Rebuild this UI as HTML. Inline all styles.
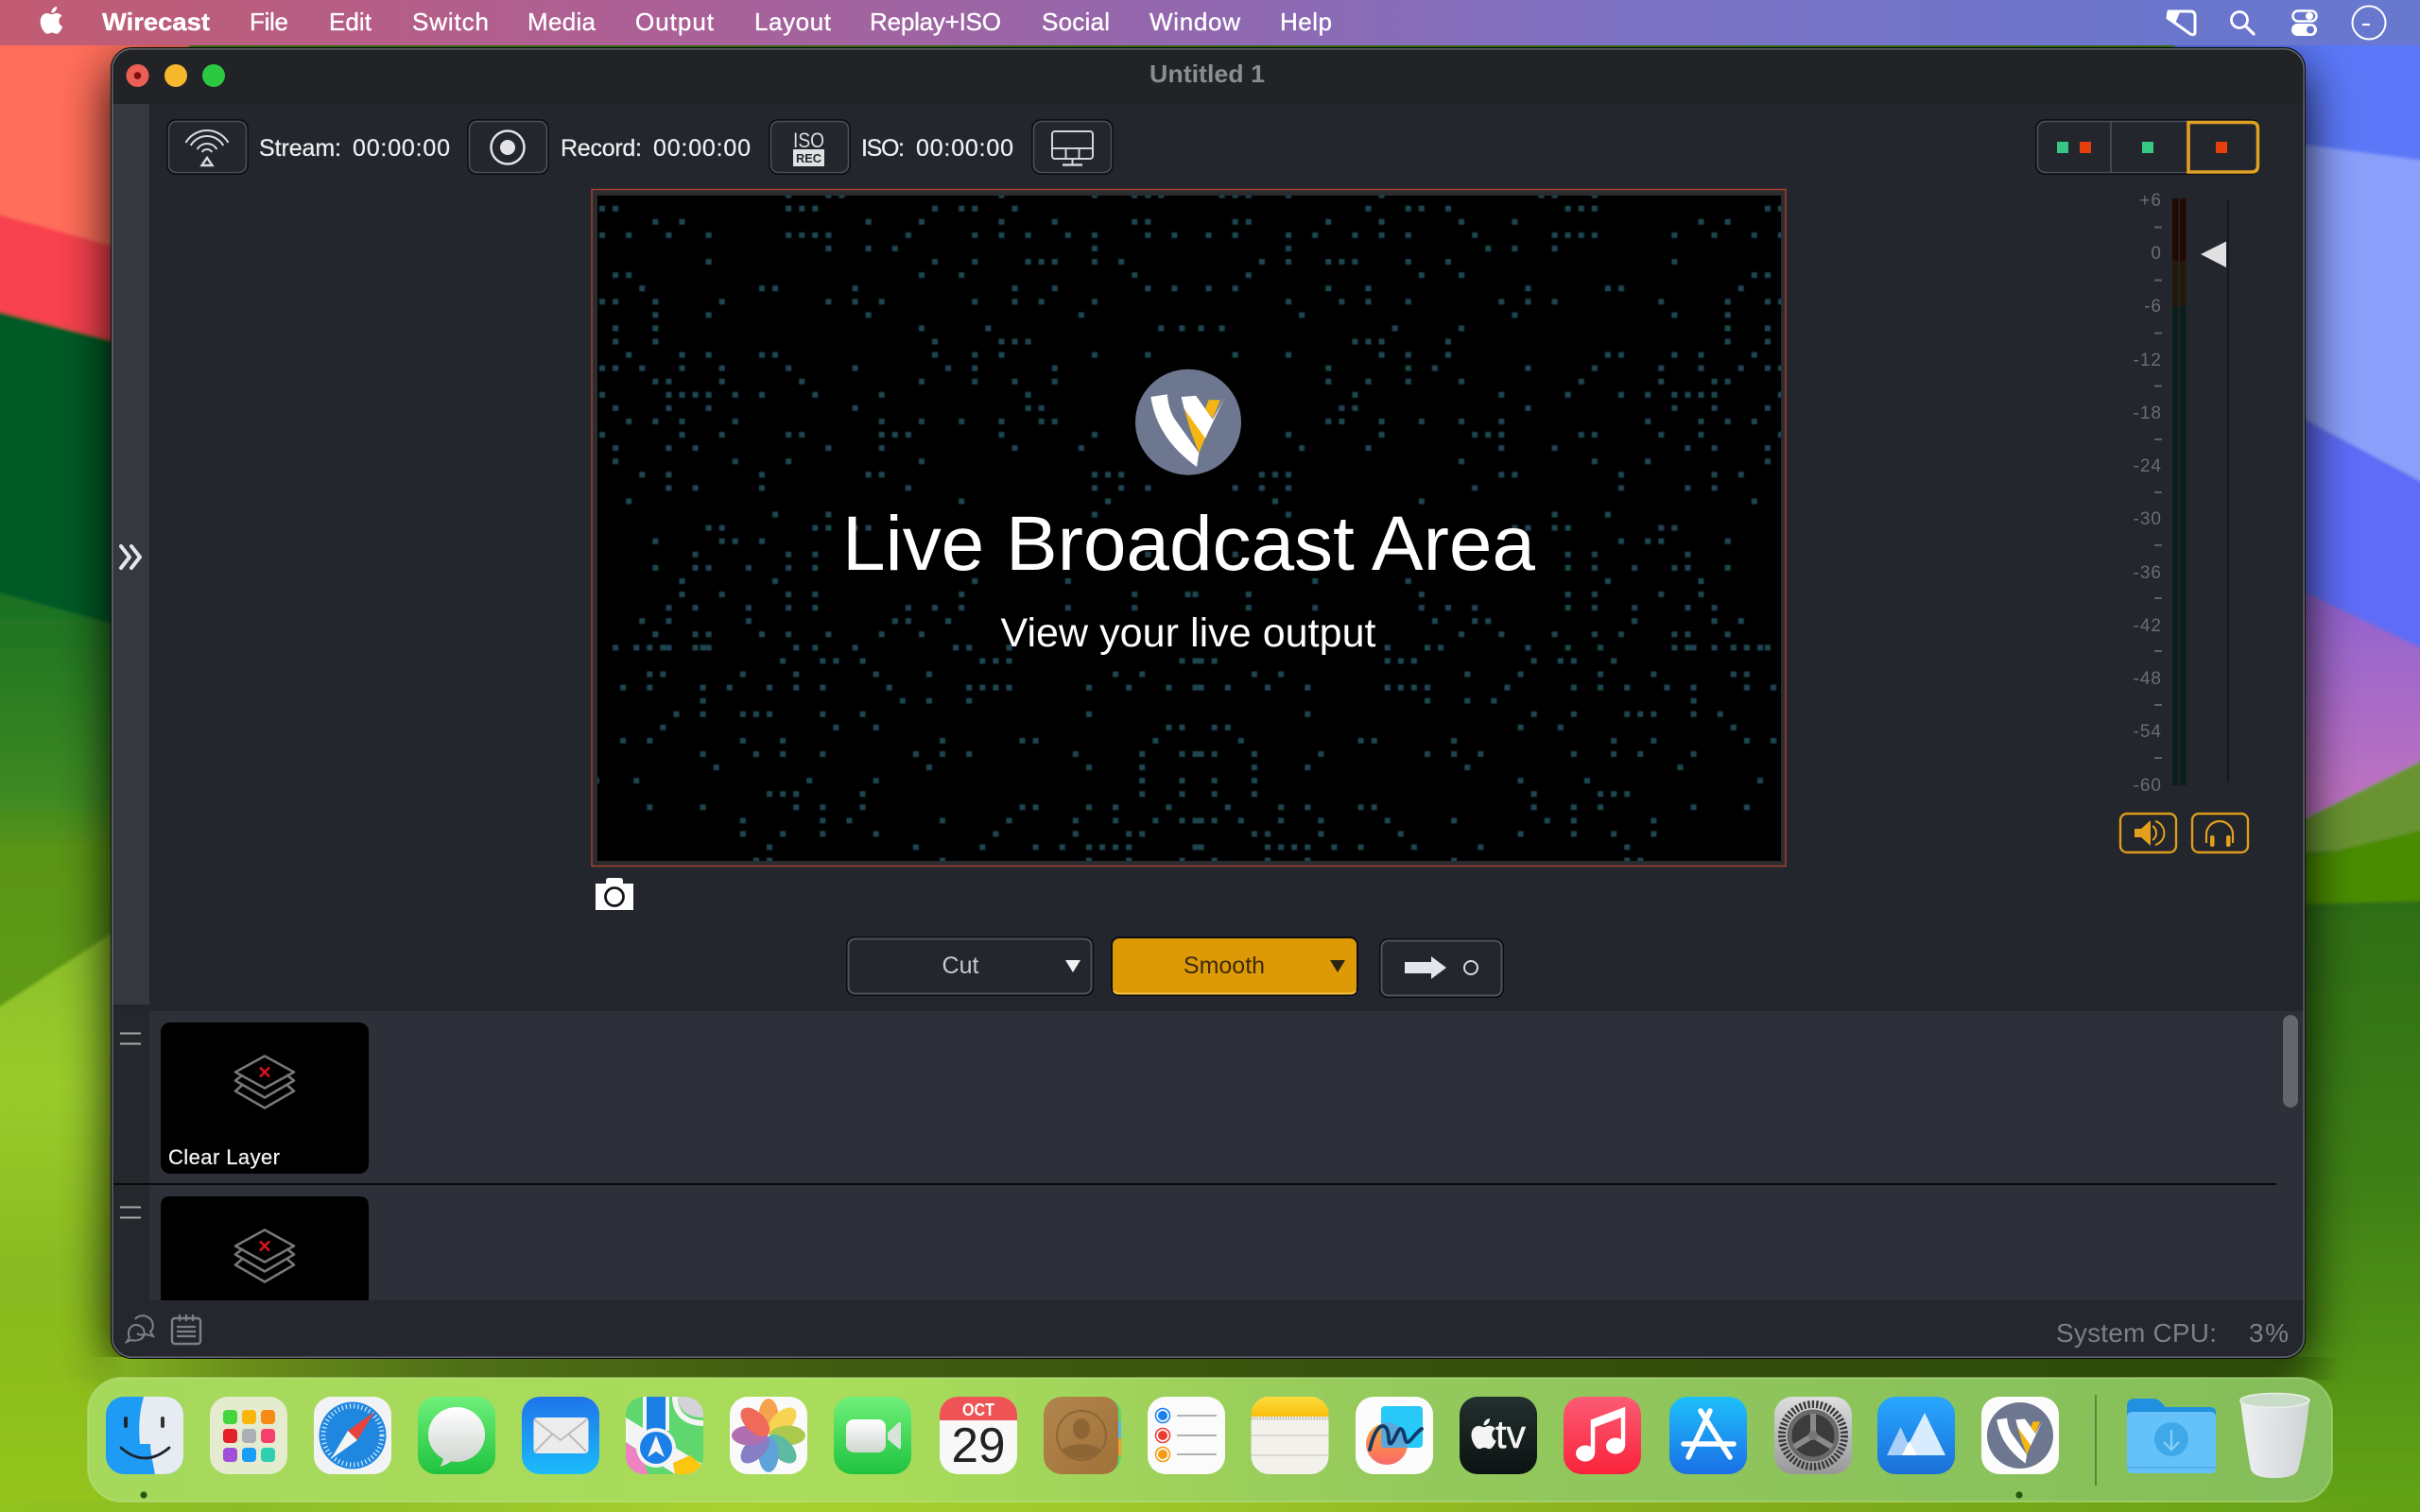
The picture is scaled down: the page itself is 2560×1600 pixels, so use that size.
<!DOCTYPE html>
<html lang="en">
<head>
<meta charset="utf-8">
<title>Wirecast – Untitled 1</title>
<style>
html,body{margin:0;padding:0;width:2560px;height:1600px;overflow:hidden;background:#5a9614}
svg{display:block;position:absolute;left:0;top:0}
text{font-family:"Liberation Sans",sans-serif}
.m{font-size:26px;fill:#fff;stroke:#fff;stroke-width:.35}
.t{font-size:25px;fill:#eceef0;stroke:#eceef0;stroke-width:.25}
.l{font-size:19px;fill:#6a6d73;text-anchor:end;letter-spacing:1px}
</style>
</head>
<body>
<svg width="2560" height="1600" viewBox="0 0 2560 1600" xmlns="http://www.w3.org/2000/svg">
<defs>
<filter id="b3" x="-10%" y="-10%" width="120%" height="120%"><feGaussianBlur stdDeviation="1.5"/></filter>
<filter id="b1" x="-2%" y="-2%" width="104%" height="104%"><feGaussianBlur stdDeviation=".6"/></filter>
<filter id="sh" x="-10%" y="-10%" width="120%" height="120%"><feGaussianBlur stdDeviation="26"/></filter>
<linearGradient id="mb" x1="0" x2="1" y1="0" y2="0"><stop offset="0" stop-color="#c25c72"/><stop offset=".25" stop-color="#ae6094"/><stop offset=".5" stop-color="#9168b0"/><stop offset=".67" stop-color="#7e72c4"/><stop offset=".9" stop-color="#6a76cc"/><stop offset="1" stop-color="#6878cf"/></linearGradient>
<linearGradient id="lm" gradientUnits="userSpaceOnUse" x1="0" x2="0" y1="620" y2="1040"><stop offset="0" stop-color="#1a7020"/><stop offset=".54" stop-color="#3f8a22"/><stop offset=".66" stop-color="#5a9418"/><stop offset="1" stop-color="#5e9a18"/></linearGradient>
<linearGradient id="ll" gradientUnits="userSpaceOnUse" x1="0" x2="0" y1="1000" y2="1600"><stop offset="0" stop-color="#8cc02c"/><stop offset=".25" stop-color="#9acb2c"/><stop offset=".58" stop-color="#8aba20"/><stop offset="1" stop-color="#94c41e"/></linearGradient>
<linearGradient id="pp" gradientUnits="userSpaceOnUse" x1="0" x2="0" y1="620" y2="840"><stop offset="0" stop-color="#8f62d0"/><stop offset="1" stop-color="#bc72c0"/></linearGradient>
<linearGradient id="rg" gradientUnits="userSpaceOnUse" x1="0" x2="0" y1="955" y2="1600"><stop offset="0" stop-color="#2f6e14"/><stop offset=".46" stop-color="#3f8014"/><stop offset=".85" stop-color="#5a9a14"/><stop offset="1" stop-color="#64a418"/></linearGradient>
<linearGradient id="s1" x1="0" x2="1" y1="0" y2="0"><stop offset="0" stop-color="#84ac1e" stop-opacity="0"/><stop offset=".03" stop-color="#7fae20"/><stop offset=".08" stop-color="#6a8e1a"/><stop offset=".18" stop-color="#4e6e16"/><stop offset=".35" stop-color="#3f5a10"/><stop offset=".7" stop-color="#344e0c"/><stop offset=".965" stop-color="#2c4a08"/><stop offset="1" stop-color="#2c4a08" stop-opacity="0"/></linearGradient>
<linearGradient id="s2" x1="0" x2="1" y1="0" y2="0"><stop offset="0" stop-color="#92c21e"/><stop offset=".1" stop-color="#8dbd26"/><stop offset=".3" stop-color="#a8d030"/><stop offset=".45" stop-color="#a0ca2c"/><stop offset=".7" stop-color="#86ae1c"/><stop offset="1" stop-color="#62a016"/></linearGradient>
<linearGradient id="dk" x1="0" x2="1" y1="0" y2="0"><stop offset="0" stop-color="#a6d85c"/><stop offset=".35" stop-color="#a9dc5a"/><stop offset=".6" stop-color="#93c85c"/><stop offset="1" stop-color="#84be5a"/></linearGradient>
<linearGradient id="mail" x1="0" x2="0" y1="0" y2="1"><stop offset="0" stop-color="#1e74ea"/><stop offset="1" stop-color="#1cbcfb"/></linearGradient>
<linearGradient id="grn" x1="0" x2="0" y1="0" y2="1"><stop offset="0" stop-color="#6ff07a"/><stop offset="1" stop-color="#1fc23e"/></linearGradient>
<linearGradient id="wht" x1="0" x2="0" y1="0" y2="1"><stop offset="0" stop-color="#fff"/><stop offset="1" stop-color="#cfd6d0"/></linearGradient>
<linearGradient id="asb" x1="0" x2="0" y1="0" y2="1"><stop offset="0" stop-color="#1ec0fb"/><stop offset="1" stop-color="#1a6fe6"/></linearGradient>
<linearGradient id="alt" x1="0" x2="0" y1="0" y2="1"><stop offset="0" stop-color="#28a8ff"/><stop offset="1" stop-color="#1a6fd8"/></linearGradient>
<linearGradient id="mus" x1="0" x2="0" y1="0" y2="1"><stop offset="0" stop-color="#fb5c74"/><stop offset="1" stop-color="#fa233b"/></linearGradient>
<linearGradient id="tvb" x1="0" x2="0" y1="0" y2="1"><stop offset="0" stop-color="#22302e"/><stop offset="1" stop-color="#0c1212"/></linearGradient>
<linearGradient id="gear" x1="0" x2="0" y1="0" y2="1"><stop offset="0" stop-color="#dcdee0"/><stop offset="1" stop-color="#989898"/></linearGradient>
<linearGradient id="brn" x1="0" x2="1" y1="0" y2="1"><stop offset="0" stop-color="#b2854e"/><stop offset="1" stop-color="#a07238"/></linearGradient>
<linearGradient id="ntop" x1="0" x2="0" y1="0" y2="1"><stop offset="0" stop-color="#fedc3c"/><stop offset="1" stop-color="#f9c00c"/></linearGradient>
<linearGradient id="ffo" x1="0" x2="0" y1="0" y2="1"><stop offset="0" stop-color="#ffaa30"/><stop offset="1" stop-color="#f76a6a"/></linearGradient>
<linearGradient id="trs" x1="0" x2="1" y1="0" y2="0"><stop offset="0" stop-color="#eef0f0"/><stop offset=".6" stop-color="#dcdfe2"/><stop offset="1" stop-color="#cfd2d4"/></linearGradient>
<clipPath id="wc"><rect x="118" y="51" width="2320" height="1386" rx="22"/></clipPath>
<clipPath id="pc"><rect x="632" y="207" width="1252" height="704"/></clipPath>
<clipPath id="t82"><rect width="82" height="82" rx="19"/></clipPath>
<path id="apl" d="M12.152 6.896c-.948 0-2.415-1.078-3.96-1.04-2.04.027-3.91 1.183-4.961 3.014-2.117 3.675-.546 9.103 1.519 12.09 1.013 1.454 2.208 3.09 3.792 3.039 1.52-.065 2.09-.987 3.935-.987 1.831 0 2.35.987 3.96.948 1.637-.026 2.676-1.48 3.676-2.948 1.156-1.688 1.636-3.325 1.662-3.415-.039-.013-3.182-1.221-3.22-4.857-.026-3.04 2.48-4.494 2.597-4.559-1.429-2.09-3.623-2.324-4.39-2.376-2-.156-3.675 1.09-4.61 1.09zM15.53 3.83c.843-1.012 1.4-2.427 1.245-3.83-1.207.052-2.662.805-3.532 1.818-.78.896-1.454 2.338-1.273 3.714 1.338.104 2.715-.688 3.559-1.701"/>
<g id="wl">
<circle cx="56" cy="56" r="56" fill="#6d7890"/>
<path d="M51.700 42L74 72.600L67.300 88.600L58.800 66Z" fill="#f7b512"/>
<path d="M16.400 29.300L33.800 26.600C35 40 38 48 44 56L67.300 88.600L65 103.300C44 88 22 66 16.400 29.300Z" fill="#fff"/>
<path d="M48.600 29.300L64 28L82 53L94.500 30L74 73L51.700 42Z" fill="#fff"/>
<path d="M77.600 32.600L90 32.600L82 52L74 42Z" fill="#f7b512"/>
</g>
<g id="lay" fill="none" stroke="#77787a" stroke-width="2.600" stroke-linejoin="round" stroke-linecap="round">
<path d="M-24 14L-31 20L0 38L31 20L24 14"/>
<path d="M-24 3.500L-31 9L0 27L31 9L24 3.500"/>
<path d="M0 -17L31 0L0 17L-31 0Z"/>
<path d="M-5 -5L5 5M5 -5L-5 5" stroke="#d8141c" stroke-width="2.600" stroke-linecap="butt"/>
</g>
<path id="dots" fill="none" stroke="#2b6272" stroke-width=".43" d="M14 -1h.43M17 -1h.43M18 -1h.43M30 -1h.43M37 -1h.43M40 -1h.43M41 -1h.43M42 -1h.43
M0 0h.43M1 0h.43M14 0h.43M15 0h.43M16 0h.43M25 0h.43M27 0h.43M28 0h.43M31 0h.43
M4 1h.43M6 1h.43M20 1h.43M24 1h.43M30 1h.43M34 1h.43M40 1h.43M41 1h.43
M0 2h.43M2 2h.43M5 2h.43M8 2h.43M14 2h.43M15 2h.43M16 2h.43M17 2h.43M23 2h.43M28 2h.43M30 2h.43M32 2h.43M35 2h.43M37 2h.43M41 2h.43M43 2h.43
M17 3h.43M20 3h.43M22 3h.43M37 3h.43
M8 4h.43M25 4h.43M28 4h.43M32 4h.43M33 4h.43M34 4h.43M37 4h.43M39 4h.43
M1 5h.43M2 5h.43M24 5h.43M27 5h.43M40 5h.43
M3 6h.43M12 6h.43M13 6h.43M19 6h.43M31 6h.43M34 6h.43M41 6h.43M43 6h.43
M0 7h.43M1 7h.43M4 7h.43M9 7h.43M17 7h.43M19 7h.43M21 7h.43M28 7h.43M31 7h.43M33 7h.43M37 7h.43
M4 8h.43M8 8h.43M20 8h.43M36 8h.43
M1 9h.43M4 9h.43M24 9h.43M29 9h.43M42 9h.43M45 9h.43
M1 10h.43M4 10h.43M25 10h.43M30 10h.43M31 10h.43M32 10h.43
M2 11h.43M6 11h.43M8 11h.43M12 11h.43M13 11h.43M25 11h.43M28 11h.43M30 11h.43M37 11h.43M41 11h.43
M0 12h.43M1 12h.43M3 12h.43M6 12h.43M9 12h.43M14 12h.43M19 12h.43M26 12h.43M28 12h.43M34 12h.43
M4 13h.43M5 13h.43M9 13h.43M15 13h.43M24 13h.43M28 13h.43M31 13h.43M34 13h.43
M0 14h.43M5 14h.43M6 14h.43M7 14h.43M8 14h.43M10 14h.43M12 14h.43M16 14h.43M21 14h.43M32 14h.43
M1 15h.43M5 15h.43M8 15h.43M19 15h.43M32 15h.43M33 15h.43
M2 16h.43M4 16h.43M6 16h.43M10 16h.43M21 16h.43M24 16h.43M27 16h.43M30 16h.43M33 16h.43M34 16h.43
M0 17h.43M6 17h.43M9 17h.43M14 17h.43M15 17h.43M21 17h.43M22 17h.43M23 17h.43M30 17h.43M37 17h.43
M1 18h.43M5 18h.43M7 18h.43M17 18h.43M21 18h.43M31 18h.43M36 18h.43
M1 19h.43M10 19h.43M14 19h.43M24 19h.43
M3 20h.43M5 20h.43M12 20h.43M20 20h.43M21 20h.43M37 20h.43M38 20h.43M39 20h.43
M5 21h.43M7 21h.43M12 21h.43M23 21h.43M37 21h.43M39 21h.43M41 21h.43
M2 22h.43M27 22h.43M38 22h.43
M13 23h.43M17 23h.43M37 23h.43
M8 24h.43M9 24h.43M16 24h.43M17 24h.43M19 24h.43M20 24h.43
M4 25h.43M9 25h.43M10 25h.43M12 25h.43M33 25h.43
M7 26h.43M14 26h.43M16 26h.43M41 26h.43
M4 27h.43M7 27h.43M8 27h.43M11 27h.43M14 27h.43M16 27h.43
M6 28h.43M13 28h.43M28 28h.43M35 28h.43
M6 29h.43M9 29h.43M14 29h.43M16 29h.43M27 29h.43M40 29h.43M44 29h.43
M5 30h.43M7 30h.43M11 30h.43M14 30h.43M16 30h.43M23 30h.43M25 30h.43M27 30h.43M35 30h.43M40 30h.43
M3 31h.43M5 31h.43M11 31h.43M22 31h.43M23 31h.43M26 31h.43
M4 32h.43M7 32h.43M8 32h.43M12 32h.43M14 32h.43M17 32h.43M21 32h.43M24 32h.43
M1 33h.43M5 33h.43M7 33h.43M8 33h.43M16 33h.43M19 33h.43"/>
</defs>

<!-- wallpaper -->
<rect width="2560" height="1600" fill="#3f8014"/>
<g filter="url(#b3)">
<polygon points="-20,0 200,0 200,300 -20,222" fill="#ff6e5a"/>
<polygon points="-20,222 118,260 200,282 200,385 -20,325" fill="#f8434f"/>
<polygon points="-20,325 118,360 200,380 200,690 -20,622" fill="#005a28"/>
<polygon points="-20,622 118,660 200,680 200,1000 -20,1090" fill="url(#lm)"/>
<polygon points="-20,1078 118,988 200,962 200,1620 -20,1620" fill="url(#ll)"/>
<polygon points="2300,0 2580,0 2580,172 2300,140" fill="#5c78f8"/>
<polygon points="2300,135 2580,172 2580,520 2300,370" fill="#8a9ffa"/>
<polygon points="2300,370 2580,520 2580,695 2300,560" fill="#5f6cf8"/>
<polygon points="2300,560 2580,695 2580,900 2300,900" fill="url(#pp)"/>
<polygon points="2300,895 2438,866 2580,796 2580,890 2300,915" fill="#6a9430"/>
<polygon points="2300,912 2438,908 2580,874 2580,960 2300,965" fill="#4a8c00"/>
<polygon points="2300,960 2580,953 2580,1620 2300,1620" fill="url(#rg)"/>
</g>
<rect x="118" y="70" width="2320" height="1378" rx="22" fill="#000" opacity=".95" filter="url(#sh)"/>
<rect x="60" y="1436" width="2415" height="24" fill="url(#s1)"/>
<rect x="0" y="1588" width="2560" height="12" fill="url(#s2)"/>

<!-- menu bar -->
<rect width="2560" height="48" fill="url(#mb)"/>
<use href="#apl" transform="translate(40,7) scale(1.2)" fill="#fff"/>
<text x="108" y="32" class="m" font-weight="700" textLength="114" lengthAdjust="spacingAndGlyphs">Wirecast</text>
<text x="264" y="32" class="m" textLength="41">File</text>
<text x="348" y="32" class="m" textLength="45">Edit</text>
<text x="436" y="32" class="m" textLength="81">Switch</text>
<text x="558" y="32" class="m" textLength="72">Media</text>
<text x="672" y="32" class="m" textLength="83">Output</text>
<text x="798" y="32" class="m" textLength="81">Layout</text>
<text x="920" y="32" class="m" textLength="139">Replay+ISO</text>
<text x="1102" y="32" class="m" textLength="72">Social</text>
<text x="1216" y="32" class="m" textLength="96">Window</text>
<text x="1354" y="32" class="m" textLength="55">Help</text>
<path d="M2294 12H2317Q2322 12 2322 17V34Q2322 38 2317 36L2306 28L2293 19Z" fill="none" stroke="#fff" stroke-width="3" stroke-linejoin="round"/>
<polygon points="2293,13 2306,13 2301,25 2293,19" fill="#fff"/>
<circle cx="2369" cy="21" r="8.500" fill="none" stroke="#fff" stroke-width="2.800"/>
<path d="M2375.500 27.500L2384 36" stroke="#fff" stroke-width="3.200" stroke-linecap="round"/>
<rect x="2425.500" y="11.500" width="25" height="11" rx="5.500" fill="none" stroke="#fff" stroke-width="2.500"/>
<circle cx="2443" cy="17" r="4" fill="#fff"/>
<rect x="2424" y="25" width="27" height="13" rx="6.500" fill="#fff"/>
<circle cx="2444" cy="31.500" r="4" fill="#6a76cc"/>
<circle cx="2506" cy="24" r="17.500" fill="none" stroke="#fff" stroke-width="2"/>
<path d="M2499 26H2507" stroke="#fff" stroke-width="2.200"/>

<!-- window -->
<g clip-path="url(#wc)">
<rect x="118" y="51" width="2320" height="1386" fill="#23262d"/>
<rect x="118" y="51" width="2320" height="59" fill="#212327"/>
<rect x="118" y="110" width="40" height="953" fill="#363840"/>
<rect x="158" y="1070" width="2280" height="306" fill="#2d3038"/>
<rect x="118" y="1070" width="40" height="306" fill="#25272d"/>
<rect x="120" y="1252" width="2288" height="2" fill="#08090a"/>
<rect x="118" y="1376" width="2320" height="61" fill="#24272e"/>
</g>
<rect x="117.500" y="50.500" width="2321" height="1387" rx="22" fill="none" stroke="#0a0a0c" stroke-width="1"/>
<rect x="118.800" y="51.800" width="2318.400" height="1384.400" rx="21" fill="none" stroke="#6a6c74" stroke-width="1.400"/>

<!-- traffic lights -->
<circle cx="145.500" cy="80" r="12" fill="#ec5f55"/>
<circle cx="145.500" cy="80" r="3.800" fill="#7d0f0c"/>
<circle cx="186" cy="80" r="12" fill="#f8b82e"/>
<circle cx="226" cy="80" r="12" fill="#2bc840"/>
<text x="1277" y="87" text-anchor="middle" font-size="26" font-weight="700" fill="#8b8d8f" textLength="122" lengthAdjust="spacingAndGlyphs">Untitled 1</text>

<!-- toolbar -->
<g fill="#23262d" stroke="#0e1013" stroke-width="2">
<rect x="177" y="127" width="85" height="57" rx="9"/>
<rect x="495" y="127" width="85" height="57" rx="9"/>
<rect x="814" y="127" width="85" height="57" rx="9"/>
<rect x="1092" y="127" width="85" height="57" rx="9"/>
</g>
<g fill="none" stroke="#4c4f58" stroke-width="1.600">
<rect x="178.500" y="128.500" width="82" height="54" rx="8"/>
<rect x="496.500" y="128.500" width="82" height="54" rx="8"/>
<rect x="815.500" y="128.500" width="82" height="54" rx="8"/>
<rect x="1093.500" y="128.500" width="82" height="54" rx="8"/>
</g>
<g fill="none" stroke="#dadbdd" stroke-width="2">
<path d="M196.500 151A26 26 0 0 1 241.500 151"/>
<path d="M201.700 154A20 20 0 0 1 236.300 154"/>
<path d="M208.600 158A12 12 0 0 1 229.400 158"/>
<path d="M213.800 161A6 6 0 0 1 224.200 161"/>
<path d="M219 167L213.500 175H224.500Z" stroke-width="2.400"/>
</g>
<text x="274" y="165" class="t" textLength="87">Stream:</text>
<text x="373" y="165" class="t" textLength="103">00:00:00</text>
<circle cx="537" cy="156" r="17.500" fill="none" stroke="#e4e4e6" stroke-width="2.500"/>
<circle cx="537" cy="156" r="8" fill="#e4e4e6"/>
<text x="593" y="165" class="t" textLength="86">Record:</text>
<text x="691" y="165" class="t" textLength="103">00:00:00</text>
<text x="855.500" y="156" text-anchor="middle" font-size="22" fill="#dadbdd" textLength="33" lengthAdjust="spacingAndGlyphs">ISO</text>
<rect x="839" y="158" width="33" height="18" fill="#dfe0e2"/>
<text x="855.500" y="172" text-anchor="middle" font-size="12.500" font-weight="700" fill="#23262d" textLength="27" lengthAdjust="spacingAndGlyphs">REC</text>
<text x="911" y="165" class="t" textLength="46">ISO:</text>
<text x="969" y="165" class="t" textLength="103">00:00:00</text>
<g fill="none" stroke="#d2d3d6" stroke-width="2">
<rect x="1113" y="139" width="43" height="29" rx="3"/>
<path d="M1113 157H1156M1127.500 157V168M1141.500 157V168M1134.500 168V174" />
<path d="M1124 174.500H1145" stroke-width="2.500"/>
</g>

<!-- layout switch -->
<rect x="2154" y="127" width="236" height="57" rx="9" fill="#23262d" stroke="#0e1013" stroke-width="2"/>
<rect x="2155.500" y="128.500" width="233" height="54" rx="8" fill="none" stroke="#4c4f58" stroke-width="1.600"/>
<path d="M2233 129V182" stroke="#4c4f58" stroke-width="1.600"/>
<path d="M2315 129.500H2382Q2388.500 129.500 2388.500 136V175Q2388.500 182 2382 182H2315Z" fill="none" stroke="#dfa024" stroke-width="3.600"/>
<rect x="2176" y="150" width="12" height="12" fill="#37c785"/>
<rect x="2200" y="150" width="12" height="12" fill="#e6400f"/>
<rect x="2266" y="150" width="12" height="12" fill="#37c785"/>
<rect x="2344" y="150" width="12" height="12" fill="#e6400f"/>

<!-- preview -->
<rect x="626" y="200.500" width="1263" height="716" fill="#2b2c30" stroke="#a8442f" stroke-width="1.400"/>
<rect x="632" y="207" width="1252" height="704" fill="#000"/>
<g clip-path="url(#pc)"><g filter="url(#b1)" opacity=".72">
<use href="#dots" transform="translate(634,220.700) scale(14.08)"/>
<use href="#dots" transform="translate(1887,220.700) scale(-14.08,14.08)"/>
<use href="#dots" transform="translate(1267.600,699.400) scale(-14.08,14.08)"/>
<use href="#dots" transform="translate(1267.600,699.400) scale(14.08)"/>
</g></g>
<use href="#wl" transform="translate(1201,390.700)"/>
<text x="1257.500" y="603" text-anchor="middle" font-size="82" fill="#fff" textLength="733">Live Broadcast Area</text>
<text x="1257" y="684" text-anchor="middle" font-size="43" fill="#fff" textLength="397">View your live output</text>

<!-- camera -->
<path d="M630 935H641V932Q641 929 644 929H656Q659 929 659 932V935H670V963H630Z" fill="#fff"/>
<circle cx="650" cy="949" r="9.500" fill="#fff" stroke="#15171a" stroke-width="2.800"/>

<!-- transition buttons -->
<rect x="896" y="992" width="260" height="61" rx="8" fill="#23262d" stroke="#0c0d10" stroke-width="2"/>
<rect x="897.500" y="993.500" width="257" height="58" rx="7" fill="none" stroke="#50535b" stroke-width="2"/>
<text x="1016" y="1030" text-anchor="middle" font-size="25" fill="#c8c9cc">Cut</text>
<polygon points="1127,1016 1143,1016 1135,1029" fill="#f2f2f4"/>
<rect x="1176" y="992" width="260" height="61" rx="8" fill="#de9a06" stroke="#0c0d10" stroke-width="2"/>
<path d="M1178 1048Q1179 1051.500 1184 1051.500H1428Q1433 1051.500 1434 1048" fill="none" stroke="#f2c040" stroke-width="2"/>
<text x="1295" y="1030" text-anchor="middle" font-size="25" fill="#3a2c0a">Smooth</text>
<polygon points="1407,1016 1423,1016 1415,1029" fill="#2a2414"/>
<rect x="1460" y="994" width="130" height="61" rx="8" fill="#23262d" stroke="#0c0d10" stroke-width="2"/>
<rect x="1461.500" y="995.500" width="127" height="58" rx="7" fill="none" stroke="#50535b" stroke-width="2"/>
<polygon points="1486,1018 1514,1018 1514,1012 1530,1024 1514,1036 1514,1030 1486,1030" fill="#e4e4ec"/>
<circle cx="1556" cy="1024" r="7" fill="none" stroke="#d8d9dc" stroke-width="2"/>

<!-- audio meter -->
<g>
<text x="2287" y="218" class="l">+6</text>
<text x="2287" y="274" class="l">0</text>
<text x="2287" y="330" class="l">-6</text>
<text x="2287" y="387" class="l">-12</text>
<text x="2287" y="443" class="l">-18</text>
<text x="2287" y="499" class="l">-24</text>
<text x="2287" y="555" class="l">-30</text>
<text x="2287" y="612" class="l">-36</text>
<text x="2287" y="668" class="l">-42</text>
<text x="2287" y="724" class="l">-48</text>
<text x="2287" y="780" class="l">-54</text>
<text x="2287" y="837" class="l">-60</text>
</g>
<path d="M2279 240.500h8M2279 296.500h8M2279 352.500h8M2279 408.500h8M2279 465h8M2279 521h8M2279 577h8M2279 633h8M2279 689h8M2279 746h8M2279 802h8" stroke="#5d6066" stroke-width="2"/>
<g>
<rect x="2298" y="210" width="6.500" height="66" fill="#240803"/><rect x="2306" y="210" width="6.500" height="66" fill="#240803"/>
<rect x="2298" y="276" width="6.500" height="48" fill="#241a0b"/><rect x="2306" y="276" width="6.500" height="48" fill="#241a0b"/>
<rect x="2298" y="324" width="6.500" height="507" fill="#0a1e1a"/><rect x="2306" y="324" width="6.500" height="507" fill="#0a1e1a"/>
</g>
<rect x="2356" y="212" width="2" height="616" fill="#15171a"/>
<polygon points="2328,269 2355,255.500 2355,283" fill="#e0e0e0"/>
<rect x="2243" y="861" width="59" height="41" rx="7" fill="#23262d" stroke="#dd9c1e" stroke-width="2.400"/>
<rect x="2319" y="861" width="59" height="41" rx="7" fill="#23262d" stroke="#dd9c1e" stroke-width="2.400"/>
<polygon points="2258,877 2265,877 2275,868 2275,895 2265,886 2258,886" fill="#e3a01c"/>
<path d="M2277 874A9 9 0 0 1 2277 889M2280 869A13 13 0 0 1 2280 894" fill="none" stroke="#e3a01c" stroke-width="2"/>
<path d="M2334 892V883A14 14 0 0 1 2362 883V892" fill="none" stroke="#e3a01c" stroke-width="2.200"/>
<rect x="2338" y="884" width="4.500" height="12" rx="2" fill="#e3a01c"/>
<rect x="2355" y="884" width="4.500" height="12" rx="2" fill="#e3a01c"/>

<!-- sidebar chevron -->
<path d="M128 578L137 589.500L128 601M139 578L148 589.500L139 601" fill="none" stroke="#e6e6ea" stroke-width="4" stroke-linecap="round" stroke-linejoin="round"/>

<!-- layers -->
<path d="M127 1093.500H149M127 1104.500H149M127 1277.500H149M127 1288.500H149" stroke="#a8a9ac" stroke-width="2"/>
<rect x="170" y="1082" width="220" height="160" rx="10" fill="#000"/>
<use href="#lay" transform="translate(280,1134.500)"/>
<text x="178" y="1232" font-size="22" fill="#f4f4f4" stroke="#f4f4f4" stroke-width=".25" textLength="118">Clear Layer</text>
<path d="M170 1376V1276Q170 1266 180 1266H380Q390 1266 390 1276V1376Z" fill="#000"/>
<use href="#lay" transform="translate(280,1318.500)"/>
<rect x="2415" y="1074" width="16" height="98" rx="8" fill="#63666d"/>

<!-- status bar -->
<g fill="none" stroke="#7e8084" stroke-width="2">
<path d="M143 1396C146 1392 152 1391 157 1394C163 1398 163 1406 159 1409L162 1414L155 1412C152 1413 147 1413 145 1411"/>
<path d="M136 1411C136 1404 142 1400 148 1403C154 1406 154 1414 149 1417C145 1419 142 1419 139 1418L134 1420L137 1415C136 1414 136 1412 136 1411Z"/>
<rect x="182" y="1395" width="30" height="27" rx="3" stroke-width="2.400"/>
<path d="M190 1391V1398M197 1391V1398M204 1391V1398M187 1404H207M187 1409H207M187 1414H207" stroke-width="2.200"/>
</g>
<text x="2175" y="1420" font-size="28" fill="#7c7f85" textLength="170">System CPU:</text>
<text x="2379" y="1420" font-size="28" fill="#7c7f85" textLength="42">3%</text>

<!-- dock -->
<rect x="93" y="1458" width="2374" height="131" rx="36" fill="url(#dk)" stroke="#c4e896" stroke-opacity=".45" stroke-width="2"/>

<!-- finder -->
<g transform="translate(112,1478)" clip-path="url(#t82)">
<rect width="82" height="82" fill="#1e9bf5"/>
<path d="M40 0H82V82H52C50 70 47 60 47 50H36C34 30 36 14 40 0Z" fill="#e6ecf2"/>
<rect x="19" y="21" width="4" height="12" rx="2" fill="#1c2430"/>
<rect x="58" y="21" width="4" height="12" rx="2" fill="#333"/>
<path d="M16 54Q41 76 67 54" fill="none" stroke="#1c2430" stroke-width="2.800" stroke-linecap="round"/>
</g>
<!-- launchpad -->
<g transform="translate(222,1478)">
<rect width="82" height="82" rx="19" fill="#e4ebcf"/>
<rect x="14" y="14" width="15" height="15" rx="4" fill="#46d43c"/><rect x="34" y="14" width="15" height="15" rx="4" fill="#fbb50e"/><rect x="54" y="14" width="15" height="15" rx="4" fill="#f58b14"/>
<rect x="14" y="34" width="15" height="15" rx="4" fill="#e4202a"/><rect x="34" y="34" width="15" height="15" rx="4" fill="#aab0b4"/><rect x="54" y="34" width="15" height="15" rx="4" fill="#f8406c"/>
<rect x="14" y="54" width="15" height="15" rx="4" fill="#a04fd8"/><rect x="34" y="54" width="15" height="15" rx="4" fill="#1a9ff8"/><rect x="54" y="54" width="15" height="15" rx="4" fill="#2fd0b0"/>
</g>
<!-- safari -->
<g transform="translate(332,1478)">
<rect width="82" height="82" rx="19" fill="#f2f3f5"/>
<circle cx="41" cy="41" r="35.500" fill="#1f87e0"/>
<circle cx="41" cy="41" r="31" fill="none" stroke="#d8ecfa" stroke-width="5" stroke-dasharray="1.200 3"/>
<polygon points="64,16 46,46 36,36" fill="#e8443c"/>
<polygon points="18,66 36,36 46,46" fill="#f4f4f4"/>
</g>
<!-- messages -->
<g transform="translate(442,1478)">
<rect width="82" height="82" rx="19" fill="url(#grn)"/>
<ellipse cx="41" cy="40" rx="30" ry="29" fill="url(#wht)"/>
<path d="M27 62Q27 70 23 74Q32 72 38 66Z" fill="#d4dcd4"/>
</g>
<!-- mail -->
<g transform="translate(552,1478)">
<rect width="82" height="82" rx="19" fill="url(#mail)"/>
<rect x="12.500" y="22" width="58" height="38" rx="4" fill="#ececec"/>
<path d="M13 24L41 46L69 24M14 58L33 39M68 58L49 39" fill="none" stroke="#bcbcbc" stroke-width="2"/>
</g>
<!-- maps -->
<g transform="translate(662,1478)" clip-path="url(#t82)">
<rect width="82" height="82" fill="#5fd66e"/>
<path d="M82 0V22C70 22 56 18 55 0Z" fill="#d4d4d8"/>
<path d="M52 0C52 20 66 28 82 28" fill="none" stroke="#f4f4f4" stroke-width="6"/>
<path d="M0 22L82 72V82H52L0 48Z" fill="#f4f4f4"/>
<polygon points="0,48 14,58 24,82 0,82" fill="#ee82c2"/>
<polygon points="52,82 82,82 82,74 68,62 50,70" fill="#fac70e"/>
<rect x="22" y="0" width="20" height="36" fill="#1a80e8"/>
<rect x="18" y="0" width="4" height="36" fill="#f4f4f4"/><rect x="42" y="0" width="4" height="36" fill="#f4f4f4"/>
<circle cx="32" cy="54" r="21" fill="#f4f4f4"/>
<circle cx="32" cy="54" r="17" fill="#1a80e8"/>
<path d="M32 41L41 64L32 58L23 64Z" fill="#f4f4f4"/>
</g>
<!-- photos -->
<g transform="translate(772,1478)">
<rect width="82" height="82" rx="19" fill="#fafafa"/>
<g transform="translate(41,41)" opacity=".9">
<ellipse cx="0" cy="-20" rx="10.500" ry="19" fill="#f59a3c"/>
<ellipse cx="0" cy="-20" rx="10.500" ry="19" fill="#f7cf3f" transform="rotate(45)"/>
<ellipse cx="0" cy="-20" rx="10.500" ry="19" fill="#a4c43c" transform="rotate(90)"/>
<ellipse cx="0" cy="-20" rx="10.500" ry="19" fill="#4fb49a" transform="rotate(135)"/>
<ellipse cx="0" cy="-20" rx="10.500" ry="19" fill="#4e9ad6" transform="rotate(180)"/>
<ellipse cx="0" cy="-20" rx="10.500" ry="19" fill="#7b72c0" transform="rotate(225)"/>
<ellipse cx="0" cy="-20" rx="10.500" ry="19" fill="#a860a8" transform="rotate(270)"/>
<ellipse cx="0" cy="-20" rx="10.500" ry="19" fill="#ef5a48" transform="rotate(315)"/>
</g>
</g>
<!-- facetime -->
<g transform="translate(882,1478)">
<rect width="82" height="82" rx="19" fill="url(#grn)"/>
<rect x="13" y="24" width="42" height="35" rx="8" fill="url(#wht)"/>
<path d="M57 38L69 27Q71 26 71 29V53Q71 56 69 55L57 45Z" fill="#d8e4da"/>
</g>
<!-- calendar -->
<g transform="translate(994,1478)" clip-path="url(#t82)">
<rect width="82" height="82" fill="#f8f8f8"/>
<rect width="82" height="25" fill="#ee5455"/>
<text x="41" y="20" text-anchor="middle" font-size="18" font-weight="700" fill="#fff" textLength="34" lengthAdjust="spacingAndGlyphs">OCT</text>
<text x="41" y="69" text-anchor="middle" font-size="52" fill="#222" textLength="57" lengthAdjust="spacingAndGlyphs">29</text>
</g>
<!-- contacts -->
<g transform="translate(1104,1478)" clip-path="url(#t82)">
<rect x="74" y="6" width="8" height="70" fill="#5fd66e"/>
<rect x="74" y="26" width="8" height="18" fill="#5ab8ee"/>
<rect x="74" y="44" width="8" height="18" fill="#f0a030"/>
<rect width="79" height="82" rx="16" fill="url(#brn)"/>
<circle cx="40" cy="41" r="26" fill="none" stroke="#8e6636" stroke-width="2"/>
<ellipse cx="40" cy="34" rx="9" ry="11" fill="#8e6636"/>
<path d="M19 57C24 48 56 48 61 57C54 68 26 68 19 57Z" fill="#8e6636"/>
</g>
<!-- reminders -->
<g transform="translate(1214,1478)">
<rect width="82" height="82" rx="19" fill="#fbfbfb"/>
<circle cx="16" cy="20" r="7.500" fill="none" stroke="#1a7ff0" stroke-width="1.500"/><circle cx="16" cy="20" r="5" fill="#1a7ff0"/>
<circle cx="16" cy="41" r="7.500" fill="none" stroke="#ee3b30" stroke-width="1.500"/><circle cx="16" cy="41" r="5" fill="#ee3b30"/>
<circle cx="16" cy="61" r="7.500" fill="none" stroke="#f79a0c" stroke-width="1.500"/><circle cx="16" cy="61" r="5" fill="#f79a0c"/>
<path d="M31 20H73M31 41H73M31 61H73" stroke="#a8a8a8" stroke-width="1.800"/>
</g>
<!-- notes -->
<g transform="translate(1323.500,1478)" clip-path="url(#t82)">
<rect width="82" height="82" fill="#f3f1ec"/>
<rect width="82" height="21" fill="url(#ntop)"/>
<path d="M0 23H82" stroke="#bdb9ae" stroke-width="3" stroke-dasharray="1.500 1.500"/>
<path d="M0 41H82M0 62H82" stroke="#d8d6d0" stroke-width="1.800"/>
</g>
<!-- freeform -->
<g transform="translate(1434,1478)">
<rect width="82" height="82" rx="19" fill="#fcfcfc"/>
<circle cx="33" cy="50" r="22" fill="url(#ffo)"/>
<rect x="27" y="10" width="44" height="44" rx="4" fill="#28c8f8"/>
<path d="M27 28A22 22 0 0 1 55 50V54H31Q27 54 27 50Z" fill="#5aa8d8"/>
<path d="M15 56C20 34 28 26 33 34C37 42 33 54 39 48C45 38 46 30 50 36C53 44 52 52 58 46C62 42 66 36 70 34" fill="none" stroke="#103a6a" stroke-width="3.800" stroke-linecap="round"/>
</g>
<!-- tv -->
<g transform="translate(1544,1478)">
<rect width="82" height="82" rx="19" fill="url(#tvb)"/>
<use href="#apl" transform="translate(9.500,23) scale(1.340)" fill="#f4f4f4"/>
<text x="38" y="54" font-size="42" fill="#f4f4f4" stroke="#f4f4f4" stroke-width=".5" textLength="32" lengthAdjust="spacingAndGlyphs">tv</text>
</g>
<!-- music -->
<g transform="translate(1654,1478)">
<rect width="82" height="82" rx="19" fill="url(#mus)"/>
<path d="M31 60V26L63 14V52" fill="none" stroke="#fff" stroke-width="4.500"/>
<path d="M31 26L63 14V21L31 33Z" fill="#fff"/>
<ellipse cx="23" cy="60" rx="10" ry="8.500" fill="#fff"/>
<ellipse cx="55" cy="52" rx="10" ry="8.500" fill="#fff"/>
</g>
<!-- app store -->
<g transform="translate(1766,1478)">
<rect width="82" height="82" rx="19" fill="url(#asb)"/>
<path d="M43 15L20 64M33 15L64 64M15 50H68" fill="none" stroke="#fff" stroke-width="5.500" stroke-linecap="round"/>
</g>
<!-- settings -->
<g transform="translate(1877,1478)">
<rect width="82" height="82" rx="19" fill="url(#gear)"/>
<circle cx="41" cy="41" r="33" fill="none" stroke="#3a3a3a" stroke-width="8" stroke-dasharray="2.400 2"/>
<circle cx="41" cy="41" r="25" fill="#3c3c3c" stroke="#6a6a6a" stroke-width="5"/>
<path d="M41 41V18M41 41L21 53M41 41L61 53" stroke="#8a8a8a" stroke-width="6"/>
<circle cx="41" cy="41" r="5" fill="#777"/>
</g>
<!-- altitude -->
<g transform="translate(1986,1478)">
<rect width="82" height="82" rx="19" fill="url(#alt)"/>
<polygon points="50,17 27,62 72,62" fill="#d8ecff"/>
<polygon points="24.600,32 10,62 38,62" fill="#a8d0f8"/>
<polygon points="33.600,47 26,62 42,62" fill="#fff"/>
</g>
<!-- wirecast -->
<g transform="translate(2096,1478)">
<rect width="82" height="82" rx="19" fill="#fcfcfc"/>
<use href="#wl" transform="translate(6,6) scale(.625)"/>
</g>
<!-- separator -->
<path d="M2217 1476V1572" stroke="#4d8c3a" stroke-width="2"/>
<!-- folder -->
<path d="M2250 1488Q2250 1480 2258 1480H2278Q2283 1480 2286 1484L2291 1489H2338Q2344 1489 2344 1495V1510H2250Z" fill="#2090e0"/>
<rect x="2250" y="1494" width="94" height="65" rx="5" fill="#65c2f8"/>
<rect x="2250" y="1552" width="94" height="2" fill="#52aee8"/>
<circle cx="2297" cy="1523" r="18" fill="#3fa8e8"/>
<path d="M2297 1513V1533M2289 1526L2297 1534L2305 1526" fill="none" stroke="#8ad0f8" stroke-width="2.200"/>
<!-- trash -->
<path d="M2370 1482Q2376 1530 2381 1555Q2384 1564 2406 1564Q2428 1564 2431 1555Q2438 1530 2443 1482Z" fill="url(#trs)"/>
<ellipse cx="2406.500" cy="1482" rx="36.500" ry="7.500" fill="#c8dcc8" stroke="#e8eeea" stroke-width="1.600"/>
<!-- running dots -->
<circle cx="152" cy="1582" r="3.600" fill="#1f5a12"/>
<circle cx="2136" cy="1582" r="3.600" fill="#1f5a12"/>
</svg>
</body>
</html>
